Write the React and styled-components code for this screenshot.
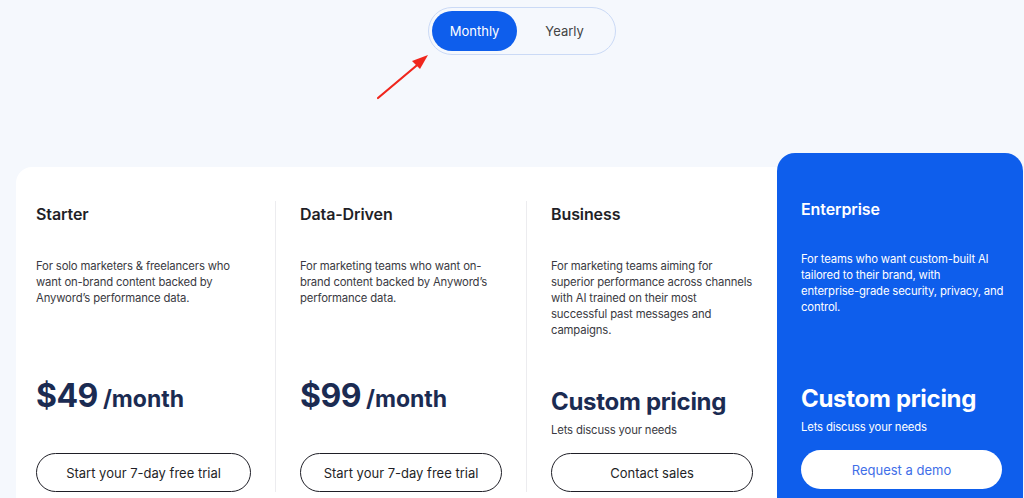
import React, { useState } from "react";
import styled, { createGlobalStyle } from "styled-components";

const colors = {
  page: "#f5f8fd",
  blue: "#0e5eec",
  navy: "#1b2b52",
  ink: "#1f1f27",
  body: "#3a3a42",
  divider: "#ececef"
};

// line breaks follow the original layout
const plans = [
  {
    id: "starter",
    name: "Starter",
    text: "For solo marketers & freelancers who\nwant on-brand content backed by\nAnyword’s performance data.",
    price: "$49",
    unit: "/month",
    cta: "Start your 7-day free trial"
  },
  {
    id: "data",
    name: "Data-Driven",
    text: "For marketing teams who want on-\nbrand content backed by Anyword’s\nperformance data.",
    price: "$99",
    unit: "/month",
    cta: "Start your 7-day free trial"
  },
  {
    id: "business",
    name: "Business",
    text: "For marketing teams aiming for\nsuperior performance across channels\nwith AI trained on their most\nsuccessful past messages and\ncampaigns.",
    custom: "Custom pricing",
    note: "Lets discuss your needs",
    cta: "Contact sales"
  }
];

const enterprise = {
  name: "Enterprise",
  text: "For teams who want custom-built AI\ntailored to their brand, with\nenterprise-grade security, privacy, and\ncontrol.",
  custom: "Custom pricing",
  note: "Lets discuss your needs",
  cta: "Request a demo"
};

const App = () => {
  const [period, setPeriod] = useState("monthly");

  return (
    <Page>
      <GlobalStyle />
      <ToggleRow>
        <Toggle>
          <ToggleOption active={period === "monthly"} onClick={() => setPeriod("monthly")}>
            Monthly
          </ToggleOption>
          <ToggleOption active={period === "yearly"} onClick={() => setPeriod("yearly")}>
            Yearly
          </ToggleOption>
          <Arrow width="56" height="48" viewBox="0 0 56 48">
            <path d="M2 46 L46 9" stroke="#f0261d" strokeWidth="2.2" strokeLinecap="round" />
            <path d="M52 3 L36 9 L44 17 Z" fill="#f0261d" />
          </Arrow>
        </Toggle>
      </ToggleRow>

      <Plans>
        <Panel>
          {plans.map((plan, i) => (
            <Column key={plan.id} first={i === 0}>
              <Title>{plan.name}</Title>
              <Description>{plan.text}</Description>
              <PriceBlock>
                {plan.price ? (
                  <Price>
                    {plan.price}
                    <Unit>{plan.unit}</Unit>
                  </Price>
                ) : (
                  <>
                    <Custom>{plan.custom}</Custom>
                    <Note>{plan.note}</Note>
                  </>
                )}
              </PriceBlock>
              <Cta>{plan.cta}</Cta>
            </Column>
          ))}
        </Panel>

        <Featured>
          <Column featured>
            <Title featured>{enterprise.name}</Title>
            <Description featured>{enterprise.text}</Description>
            <PriceBlock>
              <Custom featured>{enterprise.custom}</Custom>
              <Note featured>{enterprise.note}</Note>
            </PriceBlock>
            <Cta featured>{enterprise.cta}</Cta>
          </Column>
        </Featured>
      </Plans>
    </Page>
  );
};

export default App;

// Styles
const GlobalStyle = createGlobalStyle`
  html, body {
    margin: 0;
    padding: 0;
    background: ${colors.page};
    overflow: hidden;
  }
  body {
    font-family: "Inter", "Noto Sans", sans-serif;
    -webkit-font-smoothing: antialiased;
  }
`;

const Page = styled.div`
  width: 1024px;
  height: 498px;
  overflow: hidden;
  background: ${colors.page};
`;

const ToggleRow = styled.div`
  display: flex;
  justify-content: center;
  padding-top: 7px;
  padding-left: 20px;
`;

const Toggle = styled.div`
  position: relative;
  display: flex;
  align-items: center;
  box-sizing: border-box;
  width: 188px;
  height: 48px;
  padding: 3px;
  border: 1px solid #cbdaf6;
  border-radius: 24px;
  background: ${colors.page};
`;

const ToggleOption = styled.button`
  height: 40px;
  width: ${p => (p.active ? "88px" : "98px")};
  border: none;
  border-radius: 20px;
  background: ${p => (p.active ? colors.blue : "transparent")};
  color: ${p => (p.active ? "#fff" : "#444")};
  font-family: inherit;
  font-size: 13px;
  cursor: pointer;
`;

const Arrow = styled.svg`
  position: absolute;
  left: -53px;
  top: 44px;
`;

const Plans = styled.div`
  display: flex;
  align-items: flex-start;
  margin-top: 98px;
  padding-left: 16px;
`;

const Panel = styled.div`
  display: flex;
  margin-top: 14px;
  padding: 34px 0 40px 20px;
  background: #fff;
  border-radius: 16px 0 0 0;
`;

const Column = styled.div`
  box-sizing: border-box;
  display: flex;
  flex-direction: column;
  height: 291px;
  width: ${p => (p.featured ? "201px" : p.first ? "239px" : "251px")};
  padding: ${p => (p.featured ? "0" : p.first ? "2px 24px 0 0" : "2px 24px 0 24px")};
  border-left: ${p => (p.first || p.featured ? "none" : `1px solid ${colors.divider}`)};
`;

const Title = styled.h3`
  margin: 0;
  font-size: 16px;
  line-height: 22px;
  font-weight: 600;
  letter-spacing: -0.1px;
  color: ${p => (p.featured ? "#fff" : colors.ink)};
`;

const Description = styled.p`
  margin: ${p => (p.featured ? "31px" : "33px")} 0 0;
  font-size: 11.3px;
  line-height: 16px;
  letter-spacing: -0.15px;
  white-space: pre;
  color: ${p => (p.featured ? "#fff" : colors.body)};
`;

const PriceBlock = styled.div`
  display: flex;
  flex-direction: column;
  justify-content: flex-end;
  min-height: 59px;
  margin-top: auto;
`;

const Price = styled.div`
  display: flex;
  align-items: baseline;
  gap: 5px;
  margin-bottom: 19px;
  font-size: 32px;
  line-height: 40px;
  font-weight: 700;
  letter-spacing: -0.5px;
  color: ${colors.navy};
`;

const Unit = styled.span`
  font-size: 23px;
  font-weight: 700;
  letter-spacing: 0;
`;

const Custom = styled.div`
  font-size: 24px;
  line-height: 32px;
  font-weight: 700;
  letter-spacing: -0.3px;
  color: ${p => (p.featured ? "#fff" : colors.navy)};
`;

const Note = styled.div`
  margin-top: 4px;
  font-size: 11.3px;
  line-height: 16px;
  letter-spacing: -0.15px;
  color: ${p => (p.featured ? "#fff" : colors.body)};
`;

const Cta = styled.button`
  box-sizing: border-box;
  margin-top: 15px;
  height: 39px;
  width: 100%;
  flex-shrink: 0;
  border-radius: 20px;
  border: ${p => (p.featured ? "none" : `1px solid ${colors.ink}`)};
  background: #fff;
  color: ${p => (p.featured ? "#3f6fe8" : colors.ink)};
  font-family: inherit;
  font-size: 13px;
  cursor: pointer;
`;

const Featured = styled.div`
  box-sizing: border-box;
  width: 246px;
  padding: 45px 21px 40px 24px;
  background: ${colors.blue};
  border-radius: 18px 18px 0 0;
  flex-shrink: 0;
`;
